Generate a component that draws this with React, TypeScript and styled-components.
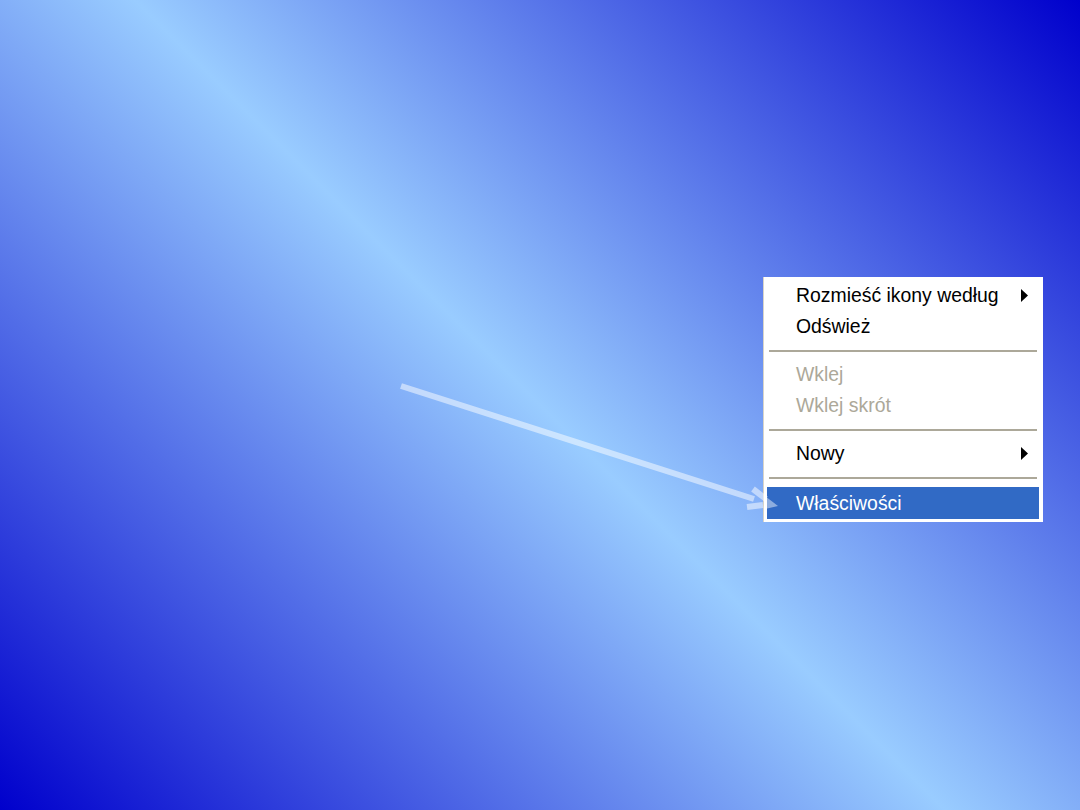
import React from 'react';
import styled, { createGlobalStyle } from 'styled-components';

const GlobalStyle = createGlobalStyle`
  html, body {
    margin: 0;
    padding: 0;
  }
  body {
    font-family: "Liberation Sans", Arial, sans-serif;
  }
`;

const Desktop = styled.div`
  position: relative;
  width: 1080px;
  height: 810px;
  overflow: hidden;
  background: linear-gradient(45deg, #0000cc 0%, #99ccff 50%, #0000cc 100%);
`;

const Menu = styled.ul`
  position: absolute;
  left: 763px;
  top: 277px;
  width: 280px;
  box-sizing: border-box;
  margin: 0;
  padding: 3px 4px 3px 3px;
  list-style: none;
  background: #fff;
  border-left: 1px solid #d8d4c8;
`;

const Item = styled.li<{ $disabled?: boolean; $active?: boolean }>`
  display: flex;
  align-items: center;
  justify-content: space-between;
  height: ${(p) => (p.$active ? '32px' : '31px')};
  margin-top: ${(p) => (p.$active ? '1px' : '0')};
  padding: 0 11px 0 29px;
  font-size: 19.4px;
  color: ${(p) => (p.$active ? '#fff' : p.$disabled ? '#aca899' : '#000')};
  background: ${(p) => (p.$active ? '#316ac5' : 'transparent')};
  white-space: nowrap;
`;

const Separator = styled.li`
  height: 17px;
  display: flex;
  align-items: center;
  padding: 0 2px;
  &::after {
    content: '';
    flex: 1;
    height: 2px;
    background: #aca899;
  }
`;

const Submenu = styled.svg`
  width: 7px;
  height: 13px;
  flex: none;
`;

const Overlay = styled.svg`
  position: absolute;
  left: 0;
  top: 0;
  width: 1080px;
  height: 810px;
  pointer-events: none;
`;

const SubArrow = () => (
  <Submenu viewBox="0 0 7 13">
    <polygon points="0,0 7,6.5 0,13" fill="#000" />
  </Submenu>
);

export default function App() {
  return (
    <>
      <GlobalStyle />
      <Desktop>
        <Menu>
          <Item>
            <span>Rozmieść ikony według</span>
            <SubArrow />
          </Item>
          <Item>
            <span>Odśwież</span>
          </Item>
          <Separator />
          <Item $disabled>
            <span>Wklej</span>
          </Item>
          <Item $disabled>
            <span>Wklej skrót</span>
          </Item>
          <Separator />
          <Item>
            <span>Nowy</span>
            <SubArrow />
          </Item>
          <Separator />
          <Item $active>
            <span>Właściwości</span>
          </Item>
        </Menu>
        <Overlay viewBox="0 0 1080 810">
          <g stroke="rgba(255,255,255,0.5)" strokeWidth="6" fill="none">
            <line x1="401" y1="386" x2="754" y2="499" />
            <line x1="753" y1="489" x2="766" y2="499" />
            <line x1="747" y1="507" x2="763" y2="505" />
          </g>
          <polygon points="765,496 778,506 765,509" fill="rgba(255,255,255,0.45)" />
        </Overlay>
      </Desktop>
    </>
  );
}
